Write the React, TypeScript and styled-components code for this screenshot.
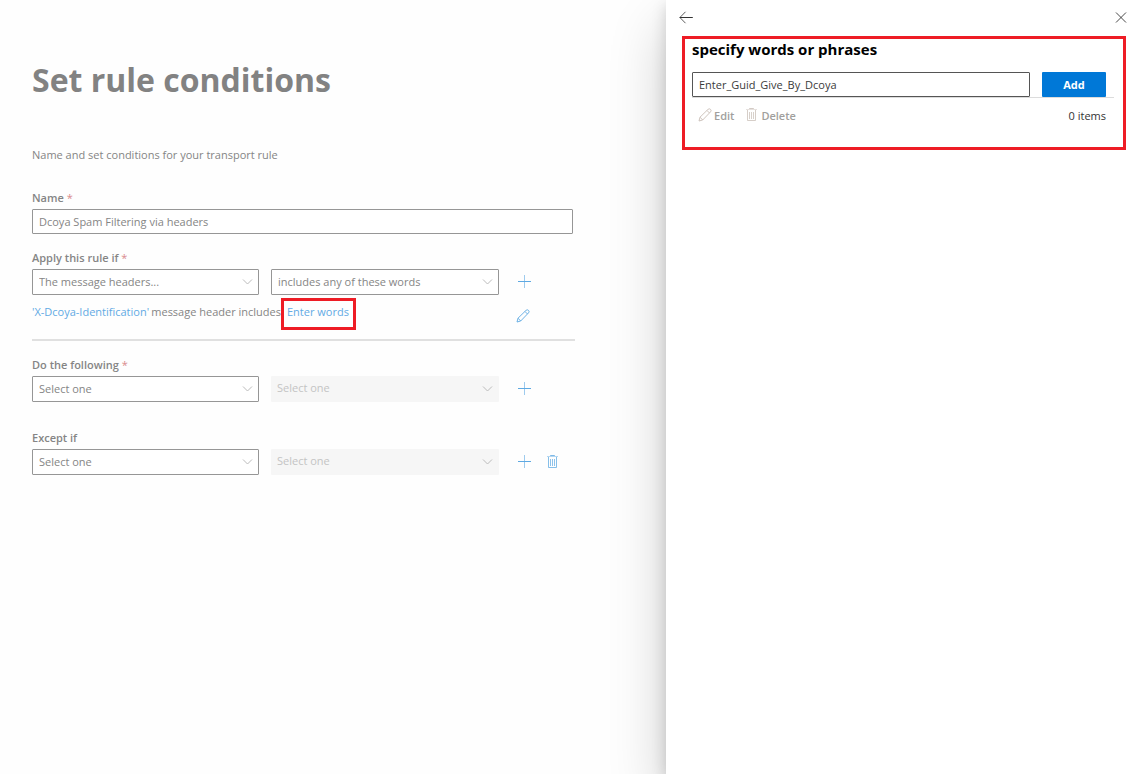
import React from "react";
import styled, { createGlobalStyle, css } from "styled-components";

const GlobalStyle = createGlobalStyle`
  *, *::before, *::after { box-sizing: border-box; }
  body {
    margin: 0;
    background: #fefefe;
    font-family: "Open Sans", "Noto Sans", sans-serif;
    font-size: 11px;
    line-height: 16px;
    color: #858585;
  }
  input, select, button { font: inherit; color: inherit; }
`;

const Page = styled.div`
  display: grid;
  grid-template-columns: minmax(0, 1fr) 468px;
  min-height: 100vh;
  overflow: hidden;
`;

const Main = styled.main`
  padding: 58px 32px;
`;

const Title = styled.h1`
  margin: 0;
  font-size: 32px;
  line-height: 44px;
  font-weight: 700;
  color: #828282;
`;

const Intro = styled.p`
  margin: 45px 0 27px;
`;

const Form = styled.form`
  max-width: 543px;
`;

const Label = styled.label`
  display: block;
  margin-bottom: 3px;
  font-weight: 600;
`;

const Required = styled.span`
  color: #d98a8d;
  font-weight: 400;
`;

const TextInput = styled.input<{ $strong?: boolean }>`
  display: block;
  width: 100%;
  min-width: 0;
  height: 25px;
  padding: 0 6px;
  border: 1px solid ${(p) => (p.$strong ? "#555" : "#969696")};
  border-radius: 1px;
  background: #fff;
  color: ${(p) => (p.$strong ? "#3b3b3b" : "#858585")};
  outline: none;
`;

const NameField = styled.div`
  padding-right: 2px;
  margin-bottom: 16px;
`;

const Group = styled.section<{ $gap?: number }>`
  margin-bottom: ${(p) => p.$gap ?? 0}px;
`;

const Row = styled.div`
  display: grid;
  grid-template-columns: 227fr 228fr 64px;
  column-gap: 12px;
  align-items: center;
`;

const SelectWrap = styled.div`
  display: grid;
  align-items: center;
  > * { grid-area: 1 / 1; }
  > svg {
    justify-self: end;
    margin-right: 5px;
    pointer-events: none;
  }
`;

const Select = styled.select`
  appearance: none;
  width: 100%;
  height: 26px;
  padding: 0 20px 0 6px;
  border: 1px solid #969696;
  border-radius: 1px;
  background: #fff;
  color: #858585;
  opacity: 1;
  &:disabled {
    padding-bottom: 2px;
    padding-left: 5px;
    border-color: #f6f6f6;
    background: #f6f6f6;
    color: #c4c4c4;
  }
`;

const Actions = styled.div`
  display: flex;
  gap: 12px;
  padding-left: 6px;
`;

const IconButton = styled.button`
  display: inline-flex;
  align-items: center;
  justify-content: center;
  width: 16px;
  height: 16px;
  padding: 0;
  border: 0;
  background: none;
  color: #5ea9e2;
  cursor: pointer;
`;

const Summary = styled.div`
  display: grid;
  grid-template-columns: 249px 1fr 60px;
  align-items: start;
  padding-top: 3px;
  margin-bottom: 9px;
`;

const Sentence = styled.div`
  display: flex;
  justify-content: space-between;
  padding-top: 6px;
  white-space: nowrap;
`;

const Link = styled.a`
  color: #62aae4;
  text-decoration: none;
`;

const outline = css`
  border: 3px solid #ee1c25;
`;

const WordsBox = styled.div`
  ${outline}
  width: 75px;
  height: 32px;
  padding: 3px;
  white-space: nowrap;
`;

const SummaryAction = styled.div`
  padding-top: 10px;
`;

const Divider = styled.hr`
  height: 2px;
  margin: 0 0 16px;
  border: 0;
  background: #e0e0e0;
`;

const Panel = styled.aside`
  padding: 9px 8px 9px 16px;
  background: #fff;
  color: #333;
  box-shadow: 0 26px 54px rgba(0, 0, 0, 0.2), 0 5px 14px rgba(0, 0, 0, 0.16);
`;

const PanelBar = styled.header`
  display: flex;
  justify-content: space-between;
  height: 27px;
  margin: 0 -3px 0 -4px;
  > button { color: #333; }
`;

const WordsEditor = styled.section`
  ${outline}
  height: 114px;
  padding: 0 9px 0 7px;
`;

const PanelTitle = styled.h2`
  margin: 0 0 13px;
  font-size: 15px;
  line-height: 20px;
  font-weight: 700;
  color: #000;
`;

const AddRow = styled.form`
  display: grid;
  grid-template-columns: minmax(0, 1fr) 64px;
  column-gap: 12px;
  padding-right: 8px;
  border-bottom: 1px solid #dcdcdc;
`;

const AddButton = styled.button`
  height: 25px;
  padding: 0;
  border: 0;
  border-radius: 1px;
  background: #0078d7;
  color: #fff;
  font-weight: 700;
`;

const ListBar = styled.div`
  display: flex;
  align-items: center;
  gap: 11px;
  padding: 10px 8px 0 6px;
`;

const ListButton = styled.button`
  display: flex;
  gap: 2px;
  padding: 0;
  border: 0;
  background: none;
  color: #a19f9d;
  font-weight: 600;
  &:disabled { color: #a19f9d; }
  > svg { color: #c8bdb5; }
`;

const Count = styled.span`
  margin-left: auto;
`;

const Svg = ({ size, children }: { size: number; children: React.ReactNode }) => (
  <svg width={size} height={size} viewBox={`0 0 ${size} ${size}`} fill="none" stroke="currentColor" aria-hidden="true">
    {children}
  </svg>
);

const Chevron = () => (
  <svg width="12" height="8" viewBox="0 0 12 8" fill="none" stroke="#bcbcbc" aria-hidden="true">
    <path d="M1 1.5 5.5 6 10 1.5" />
  </svg>
);

const Plus = () => (
  <Svg size={14}>
    <path d="M0 6.5h13" />
    <path d="M6.5 0v13" opacity="0.6" />
  </Svg>
);

const Pencil = () => (
  <Svg size={14}>
    <path d="M1 13l1-3.8L10 1.4a1.7 1.7 0 0 1 2.5 2.5L4.7 12 1 13z M9 2.5 11.5 5 M2 9.2 4.7 12" strokeWidth="0.9" />
  </Svg>
);

const Trash = () => (
  <Svg size={14}>
    <path d="M1 1.5h11" opacity="0.45" />
    <path d="M4.5 1V0.5h4V1" opacity="0.8" />
    <path d="M2.5 2v10.5h8V2" opacity="0.75" />
    <path d="M4.5 4v7M6.5 4v7M8.5 4v7" opacity="0.7" />
  </Svg>
);

const Back = () => (
  <Svg size={14}>
    <path d="M0.8 7.5h13" />
    <path d="M6.5 1.8.9 7.5l5.6 5.7" strokeWidth="0.8" />
  </Svg>
);

const Close = () => (
  <Svg size={12}>
    <path d="M1 1.5l10 10M11 1.5l-10 10" strokeWidth="0.9" />
  </Svg>
);

interface DropdownProps {
  id?: string;
  label?: string;
  value: string;
  disabled?: boolean;
}

const Dropdown = ({ id, label, value, disabled }: DropdownProps) => (
  <SelectWrap>
    <Select id={id} aria-label={label} disabled={disabled}>
      <option>{value}</option>
    </Select>
    <Chevron />
  </SelectWrap>
);

export default function App() {
  return (
    <>
      <GlobalStyle />
      <Page>
        <Main>
          <Title>Set rule conditions</Title>
          <Intro>Name and set conditions for your transport rule</Intro>
          <Form>
            <NameField>
              <Label htmlFor="name">Name <Required>*</Required></Label>
              <TextInput id="name" defaultValue="Dcoya Spam Filtering via headers" />
            </NameField>
            <Group>
              <Label htmlFor="condition">Apply this rule if <Required>*</Required></Label>
              <Row>
                <Dropdown id="condition" value="The message headers..." />
                <Dropdown label="Condition match" value="includes any of these words" />
                <Actions>
                  <IconButton type="button" aria-label="Add condition"><Plus /></IconButton>
                </Actions>
              </Row>
              <Summary>
                <Sentence>
                  <Link href="#header">'X-Dcoya-Identification'</Link>
                  <span>message header includes</span>
                </Sentence>
                <WordsBox><Link href="#words">Enter words</Link></WordsBox>
                <SummaryAction>
                  <IconButton type="button" aria-label="Edit condition"><Pencil /></IconButton>
                </SummaryAction>
              </Summary>
            </Group>
            <Divider />
            <Group $gap={28}>
              <Label htmlFor="action">Do the following <Required>*</Required></Label>
              <Row>
                <Dropdown id="action" value="Select one" />
                <Dropdown label="Action detail" value="Select one" disabled />
                <Actions>
                  <IconButton type="button" aria-label="Add action"><Plus /></IconButton>
                </Actions>
              </Row>
            </Group>
            <Group>
              <Label htmlFor="exception">Except if</Label>
              <Row>
                <Dropdown id="exception" value="Select one" />
                <Dropdown label="Exception detail" value="Select one" disabled />
                <Actions>
                  <IconButton type="button" aria-label="Add exception"><Plus /></IconButton>
                  <IconButton type="button" aria-label="Remove exception"><Trash /></IconButton>
                </Actions>
              </Row>
            </Group>
          </Form>
        </Main>
        <Panel>
          <PanelBar>
            <IconButton type="button" aria-label="Back"><Back /></IconButton>
            <IconButton type="button" aria-label="Close"><Close /></IconButton>
          </PanelBar>
          <WordsEditor>
            <PanelTitle>specify words or phrases</PanelTitle>
            <AddRow onSubmit={(e) => e.preventDefault()}>
              <TextInput $strong aria-label="Word or phrase" defaultValue="Enter_Guid_Give_By_Dcoya" />
              <AddButton type="submit">Add</AddButton>
            </AddRow>
            <ListBar>
              <ListButton type="button" disabled><Pencil />Edit</ListButton>
              <ListButton type="button" disabled><Trash />Delete</ListButton>
              <Count>0 items</Count>
            </ListBar>
          </WordsEditor>
        </Panel>
      </Page>
    </>
  );
}
